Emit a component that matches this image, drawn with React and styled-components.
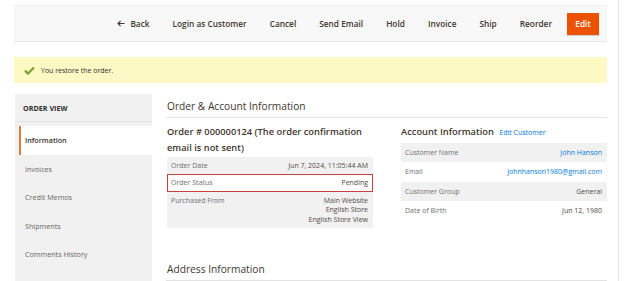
import React from "react";
import styled, { createGlobalStyle } from "styled-components";

const GlobalStyle = createGlobalStyle`
  html, body {
    margin: 0;
    padding: 0;
    background: #ffffff;
  }
  body {
    font-family: "Open Sans", "DejaVu Sans", sans-serif;
    color: #41362f;
  }
`;

const actions = ["Login as Customer", "Cancel", "Send Email", "Hold", "Invoice", "Ship", "Reorder"];
const navItems = ["Information", "Invoices", "Credit Memos", "Shipments", "Comments History"];

const orderRows = [
  { label: "Order Date", value: ["Jun 7, 2024, 11:05:44 AM"] },
  { label: "Order Status", value: ["Pending"], highlight: true },
  { label: "Purchased From", value: ["Main Website", "English Store", "English Store View"] },
];

const accountRows = [
  { label: "Customer Name", value: ["John Hanson"], link: true },
  { label: "Email", value: ["johnhanson1980@gmail.com"], link: true },
  { label: "Customer Group", value: ["General"] },
  { label: "Date of Birth", value: ["Jun 12, 1980"] },
];

export default function App() {
  return (
    <>
      <GlobalStyle />
      <Frame>
        <Toolbar>
          <ActionButton>
            <svg width="8" height="7" viewBox="0 0 8 7">
              <path d="M7.5 3.5H1M3.6 0.9L1 3.5l2.6 2.6" fill="none" stroke="#41362f" strokeWidth="1.1" />
            </svg>
            Back
          </ActionButton>
          {actions.map((a) => (
            <ActionButton key={a}>{a}</ActionButton>
          ))}
          <PrimaryButton>Edit</PrimaryButton>
        </Toolbar>

        <Message>
          <svg width="11" height="9" viewBox="0 0 11 9">
            <path d="M1 4.6l3 3L10 1.4" fill="none" stroke="#79a22e" strokeWidth="2.2" />
          </svg>
          You restore the order.
        </Message>

        <Content>
          <Sidebar>
            <SidebarTitle>Order View</SidebarTitle>
            <NavList>
              {navItems.map((item, i) => (
                <NavItem key={item} $active={i === 0}>{item}</NavItem>
              ))}
            </NavList>
          </Sidebar>

          <Main>
            <SectionTitle>Order &amp; Account Information</SectionTitle>
            <Columns>
              <Column>
                <BlockTitle>Order # 000000124 (The order confirmation email is not sent)</BlockTitle>
                <InfoTable $pad={4} $top={1}>
                  <tbody>
                    {orderRows.map((r, i) => (
                      <Row key={r.label} $striped={i % 2 === 0} $highlight={r.highlight}>
                        <Label>{r.label}</Label>
                        <Value>
                          {r.value.map((v) => (
                            <div key={v}>{v}</div>
                          ))}
                        </Value>
                      </Row>
                    ))}
                  </tbody>
                </InfoTable>
              </Column>
              <Column>
                <BlockTitle>
                  Account Information <EditLink>Edit Customer</EditLink>
                </BlockTitle>
                <InfoTable $pad={5} $top={2}>
                  <tbody>
                    {accountRows.map((r, i) => (
                      <Row key={r.label} $striped={i % 2 === 0}>
                        <Label>{r.label}</Label>
                        <Value $link={r.link}>{r.value[0]}</Value>
                      </Row>
                    ))}
                  </tbody>
                </InfoTable>
              </Column>
            </Columns>
            <SectionTitle $spaced>Address Information</SectionTitle>
          </Main>
        </Content>
      </Frame>
    </>
  );
}

const Frame = styled.div`
  width: 619px;
  height: 281px;
  box-sizing: border-box;
  padding: 5px 11px 0 14px;
  border-right: 1px solid #e6e6e6;
  overflow: hidden;
`;

const Toolbar = styled.div`
  display: flex;
  justify-content: flex-end;
  align-items: center;
  gap: 23px;
  height: 37px;
  box-sizing: border-box;
  padding-right: 8px;
  background: #f8f8f8;
  border-top: 1px solid #efefef;
  border-bottom: 1px solid #e6e6e6;
`;

const ActionButton = styled.span`
  display: flex;
  align-items: center;
  gap: 5px;
  font-size: 8.3px;
  font-weight: 600;
  color: #41362f;
  white-space: nowrap;
`;

const PrimaryButton = styled.span`
  display: flex;
  align-items: center;
  justify-content: center;
  width: 32px;
  height: 22px;
  margin-left: -8px;
  background: #eb5202;
  color: #ffffff;
  font-size: 8.3px;
  font-weight: 600;
  box-shadow: 0 1px 1px rgba(0, 0, 0, 0.15);
`;

const Message = styled.div`
  display: flex;
  align-items: center;
  gap: 6px;
  margin-top: 15px;
  height: 26px;
  padding-left: 10px;
  background: #fdf9c4;
  font-size: 7px;
  color: #303030;
`;

const Content = styled.div`
  display: flex;
  gap: 14px;
  margin-top: 11px;
`;

const Sidebar = styled.div`
  width: 137px;
  flex: none;
  margin-left: 1px;
  padding-bottom: 14px;
  background: #f1f1f1;
  align-self: flex-start;
`;

const SidebarTitle = styled.div`
  height: 27px;
  display: flex;
  align-items: center;
  padding-left: 8px;
  border-bottom: 1px solid #e3e3e3;
  font-size: 7.2px;
  font-weight: 700;
  text-transform: uppercase;
  color: #303030;
`;

const NavList = styled.div`
  padding-top: 4px;
  display: flex;
  flex-direction: column;
`;

const NavItem = styled.div`
  height: 28.5px;
  display: flex;
  align-items: center;
  margin-left: ${(p) => (p.$active ? "4px" : "0")};
  padding-left: ${(p) => (p.$active ? "4px" : "10px")};
  background: ${(p) => (p.$active ? "#ffffff" : "transparent")};
  border-left: ${(p) => (p.$active ? "2px solid #e07a3b" : "none")};
  font-size: 7.2px;
  font-weight: ${(p) => (p.$active ? 600 : 400)};
  color: ${(p) => (p.$active ? "#41362f" : "#666666")};
`;

const Main = styled.div`
  flex: 1;
  min-width: 0;
`;

const SectionTitle = styled.div`
  margin-top: ${(p) => (p.$spaced ? "34px" : "5px")};
  padding: 0 0 4px 1px;
  border-bottom: 1px solid #e3e3e3;
  font-size: 10.2px;
  line-height: 14px;
  color: #41362f;
`;

const Columns = styled.div`
  display: grid;
  grid-template-columns: 206px 206px;
  justify-content: space-between;
  margin-top: 6px;
  padding-left: 1px;
`;

const Column = styled.div``;

const BlockTitle = styled.div`
  font-size: 9.3px;
  font-weight: 600;
  line-height: 16px;
  color: #41362f;
`;

const EditLink = styled.span`
  margin-left: 3px;
  font-size: 7px;
  font-weight: 400;
  color: #007bdb;
`;

const InfoTable = styled.table`
  width: 100%;
  margin-top: ${(p) => p.$top}px;
  border-collapse: collapse;
  font-size: 7px;
  line-height: 9.4px;

  td {
    padding: ${(p) => p.$pad}px 5px ${(p) => p.$pad}px 4px;
    vertical-align: top;
  }
`;

const Row = styled.tr`
  background: ${(p) => (p.$striped ? "#f1f1f1" : "#ffffff")};
  outline: ${(p) => (p.$highlight ? "1px solid #c8403f" : "none")};
  outline-offset: -1px;
`;

const Label = styled.td`
  color: #6f6f6f;
  white-space: nowrap;
`;

const Value = styled.td`
  text-align: right;
  color: ${(p) => (p.$link ? "#007bdb" : "#514943")};
`;
